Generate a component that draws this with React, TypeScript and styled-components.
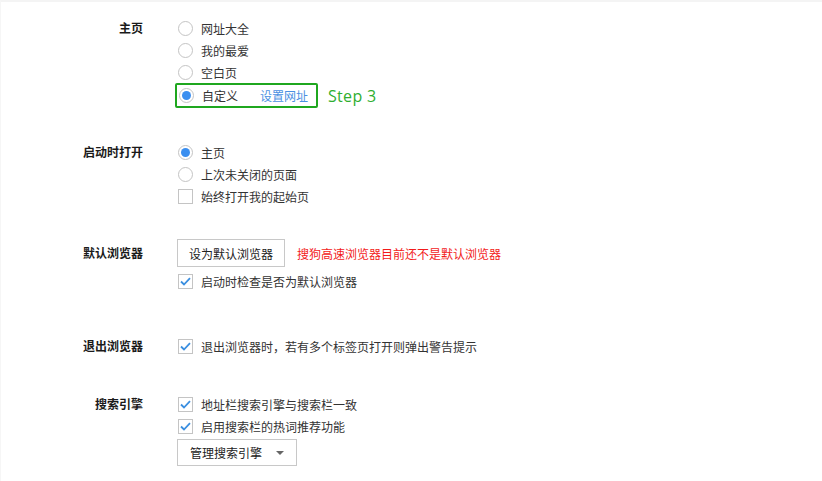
import React from "react"
import styled, { createGlobalStyle } from "styled-components"

const GlobalStyle = createGlobalStyle`
	html, body {
		margin: 0;
		padding: 0;
		background: #ffffff;
	}
	body {
		font-family: "Noto Sans CJK SC", "Noto Sans", sans-serif;
		font-size: 12px;
		color: #333333;
	}
`

const PageElement = styled.div`
	width: 822px;
	height: 481px;
	box-sizing: border-box;
	border-top: 2px solid #f4f4f4;
	border-left: 1px solid #f6f6f6;
	overflow: hidden;
	display: flex;
	flex-direction: column;
`

const SectionElement = styled.div<{ $top: number }>`
	margin-top: ${props => props.$top}px;
	display: grid;
	grid-template-columns: 142px 1fr;
	column-gap: 34px;
`

const SectionLabelElement = styled.div<{ $height?: number }>`
	height: ${props => props.$height ?? 22}px;
	line-height: ${props => props.$height ?? 22}px;
	text-align: right;
	font-weight: 700;
	color: #1a1a1a;
`

const SectionBodyElement = styled.div`
	display: flex;
	flex-direction: column;
	align-items: flex-start;
`

const OptionRowElement = styled.div<{ $height?: number }>`
	height: ${props => props.$height ?? 22}px;
	display: flex;
	flex-direction: row;
	align-items: center;
	padding-left: 1px;
`

const RadioElement = styled.span<{ $checked?: boolean }>`
	width: 15px;
	height: 15px;
	box-sizing: border-box;
	border-radius: 50%;
	border: 1px solid #c4c4c4;
	background: #ffffff;
	display: flex;
	align-items: center;
	justify-content: center;

	&::after {
		content: "";
		display: ${props => props.$checked ? "block" : "none"};
		width: 9px;
		height: 9px;
		border-radius: 50%;
		background: #3b8ff0;
	}
`

const CheckboxElement = styled.span`
	width: 15px;
	height: 15px;
	box-sizing: border-box;
	border: 1px solid #c4c4c4;
	background: #ffffff;
	display: flex;
	align-items: center;
	justify-content: center;
`

const OptionTextElement = styled.span`
	margin-left: 8px;
	color: #333333;
	white-space: nowrap;
`

const LinkTextElement = styled.span`
	margin-left: 22px;
	color: #4a90e2;
	white-space: nowrap;
`

const HighlightRowElement = styled.div`
	display: flex;
	flex-direction: row;
	align-items: center;
	margin-left: -2px;
`

const HighlightBoxElement = styled.div`
	height: 25px;
	box-sizing: border-box;
	border: 2px solid #1fa71f;
	border-radius: 2px;
	display: flex;
	flex-direction: row;
	align-items: center;
	padding: 0 8px 0 2px;
`

const StepTextElement = styled.span`
	margin-left: 10px;
	font-family: "Open Sans", "Liberation Sans", sans-serif;
	font-size: 16px;
	color: #2fae2f;
	letter-spacing: 0.3px;
`

const ButtonRowElement = styled.div`
	height: 28px;
	display: flex;
	flex-direction: row;
	align-items: center;
	margin-bottom: 3px;
`

const PlainButtonElement = styled.div`
	width: 108px;
	height: 28px;
	box-sizing: border-box;
	border: 1px solid #c8c8c8;
	background: #ffffff;
	display: flex;
	align-items: center;
	justify-content: center;
	color: #222222;
`

const WarningTextElement = styled.span`
	margin-left: 12px;
	color: #f21b1b;
	white-space: nowrap;
`

const DropdownElement = styled.div`
	margin-top: 2px;
	width: 120px;
	height: 27px;
	box-sizing: border-box;
	border: 1px solid #c8c8c8;
	background: #ffffff;
	display: flex;
	flex-direction: row;
	align-items: center;
	padding: 0 12px 0 12px;
	color: #222222;
`

const DropdownSpacerElement = styled.div`
	flex-grow: 1;
`

const DropdownArrowElement = styled.span`
	width: 0;
	height: 0;
	border-left: 4px solid transparent;
	border-right: 4px solid transparent;
	border-top: 4px solid #666666;
`

function CheckMark() {
	return (
		<svg width="11" height="9" viewBox="0 0 11 9">
			<path d="M1 4.5 L4 7.5 L10 1.2" fill="none" stroke="#3b8fe0" strokeWidth="1.8" />
		</svg>
	)
}

function RadioOption({ text, checked }: { text: string, checked?: boolean }) {
	return (
		<OptionRowElement>
			<RadioElement $checked={checked} />
			<OptionTextElement>{text}</OptionTextElement>
		</OptionRowElement>
	)
}

function CheckOption({ text, checked }: { text: string, checked?: boolean }) {
	return (
		<OptionRowElement>
			<CheckboxElement>{checked ? <CheckMark /> : null}</CheckboxElement>
			<OptionTextElement>{text}</OptionTextElement>
		</OptionRowElement>
	)
}

export default function App() {
	return (
		<PageElement>
			<GlobalStyle />

			<SectionElement $top={15}>
				<SectionLabelElement>主页</SectionLabelElement>
				<SectionBodyElement>
					<RadioOption text="网址大全" />
					<RadioOption text="我的最爱" />
					<RadioOption text="空白页" />
					<HighlightRowElement>
						<HighlightBoxElement>
							<RadioElement $checked />
							<OptionTextElement>自定义</OptionTextElement>
							<LinkTextElement>设置网址</LinkTextElement>
						</HighlightBoxElement>
						<StepTextElement>Step 3</StepTextElement>
					</HighlightRowElement>
				</SectionBodyElement>
			</SectionElement>

			<SectionElement $top={33}>
				<SectionLabelElement>启动时打开</SectionLabelElement>
				<SectionBodyElement>
					<RadioOption text="主页" checked />
					<RadioOption text="上次未关闭的页面" />
					<CheckOption text="始终打开我的起始页" />
				</SectionBodyElement>
			</SectionElement>

			<SectionElement $top={32}>
				<SectionLabelElement $height={28}>默认浏览器</SectionLabelElement>
				<SectionBodyElement>
					<ButtonRowElement>
						<PlainButtonElement>设为默认浏览器</PlainButtonElement>
						<WarningTextElement>搜狗高速浏览器目前还不是默认浏览器</WarningTextElement>
					</ButtonRowElement>
					<CheckOption text="启动时检查是否为默认浏览器" checked />
				</SectionBodyElement>
			</SectionElement>

			<SectionElement $top={43}>
				<SectionLabelElement>退出浏览器</SectionLabelElement>
				<SectionBodyElement>
					<CheckOption text="退出浏览器时，若有多个标签页打开则弹出警告提示" checked />
				</SectionBodyElement>
			</SectionElement>

			<SectionElement $top={36}>
				<SectionLabelElement>搜索引擎</SectionLabelElement>
				<SectionBodyElement>
					<CheckOption text="地址栏搜索引擎与搜索栏一致" checked />
					<CheckOption text="启用搜索栏的热词推荐功能" checked />
					<DropdownElement>
						<span>管理搜索引擎</span>
						<DropdownSpacerElement />
						<DropdownArrowElement />
					</DropdownElement>
				</SectionBodyElement>
			</SectionElement>
		</PageElement>
	)
}
